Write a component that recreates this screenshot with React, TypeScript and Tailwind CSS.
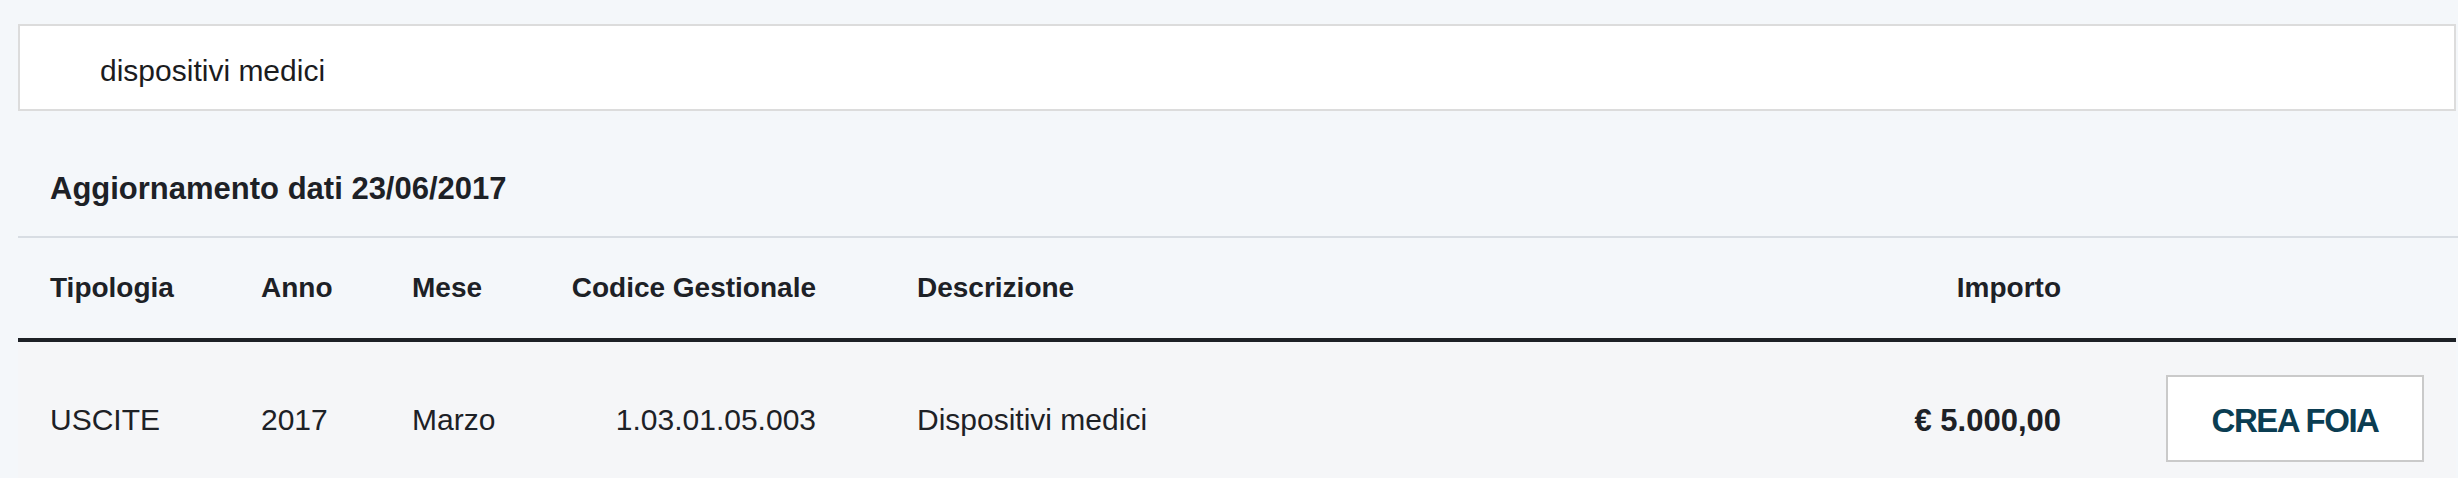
// Spending search result: search field, data-update caption and a one-row
// table with a "Crea FOIA" action on the right.

const FONT = "font-['Liberation_Sans',Arial,sans-serif]";

type Row = {
  tipologia: string;
  anno: string;
  mese: string;
  codice: string;
  descrizione: string;
  importo: string;
};

const ROWS: Row[] = [
  {
    tipologia: "USCITE",
    anno: "2017",
    mese: "Marzo",
    codice: "1.03.01.05.003",
    descrizione: "Dispositivi medici",
    importo: "€ 5.000,00",
  },
];

const GRID = "grid grid-cols-[211px_151px_163px_342px_1fr_300px_363px]";

function HeaderRow() {
  return (
    <div
      className={`${GRID} mr-[2px] h-[104px] items-center border-b-4 border-[#1d2126] text-[28px] font-bold leading-none text-[#1d2126]`}
    >
      <div className="pl-[32px]">Tipologia</div>
      <div className="pl-[32px]">Anno</div>
      <div className="pl-[32px]">Mese</div>
      <div className="pr-[69px] text-right">Codice Gestionale</div>
      <div className="pl-[32px]">Descrizione</div>
      <div className="pr-[32px] text-right">Importo</div>
      <div />
    </div>
  );
}

function DataRow({ row }: { row: Row }) {
  return (
    <div
      className={`${GRID} mr-[2px] h-[152px] items-center bg-[#f5f6f8] text-[30px] leading-none text-[#1d2126]`}
    >
      <div className="pl-[32px] pt-[4px]">{row.tipologia}</div>
      <div className="pl-[32px] pt-[4px]">{row.anno}</div>
      <div className="pl-[32px] pt-[4px]">{row.mese}</div>
      <div className="pr-[69px] pt-[4px] text-right">{row.codice}</div>
      <div className="pl-[32px] pt-[4px]">{row.descrizione}</div>
      <div className="pr-[32px] pt-[4px] text-right text-[31px] font-bold">
        {row.importo}
      </div>
      <div className="flex justify-end pr-[32px]">
        <button className="flex h-[87px] w-[258px] items-center justify-center border-2 border-[#cacaca] bg-white pt-[4px] text-[33px] font-bold leading-none tracking-[-1.5px] text-[#0b3d52]">
          CREA FOIA
        </button>
      </div>
    </div>
  );
}

export default function App() {
  return (
    <div className={`min-h-screen bg-[#f4f7fa] pl-[18px] pt-[24px] ${FONT}`}>
      <div className="mr-[2px] flex h-[87px] items-center border-2 border-[#dcdcdc] bg-white pl-[80px] pt-[6px] text-[30px] leading-none text-[#1b1c1e]">
        dispositivi medici
      </div>

      <div className="border-b-2 border-[#d8dde3] pb-[32px] pl-[32px] pt-[62px] text-[31px] font-bold leading-none text-[#1d2126]">
        Aggiornamento dati 23/06/2017
      </div>

      <HeaderRow />
      {ROWS.map((r) => (
        <DataRow key={r.codice} row={r} />
      ))}
    </div>
  );
}
